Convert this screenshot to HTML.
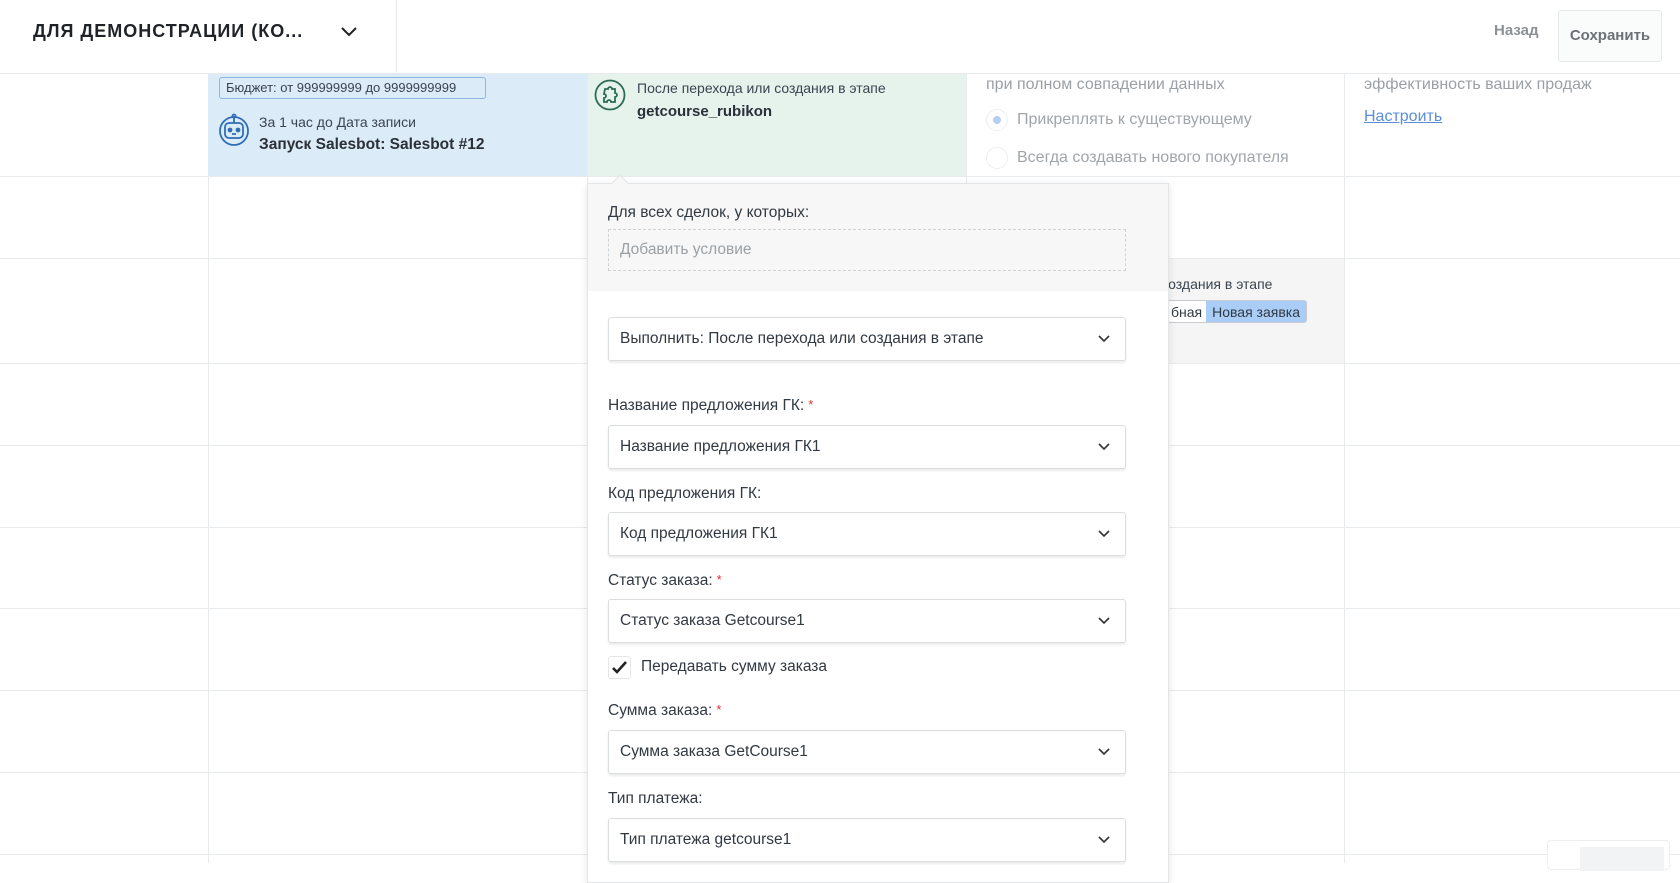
<!DOCTYPE html>
<html><head><meta charset="utf-8"><style>
*{box-sizing:border-box;margin:0;padding:0}
body{width:1680px;height:863px;overflow:hidden;background:#fff;font-family:"Liberation Sans","DejaVu Sans",sans-serif;color:#313942;position:relative}
.a{position:absolute}
.hl{position:absolute;height:1px;background:#e8ebed;left:0;width:1680px}
.vl{position:absolute;width:1px;background:#e8ebed;top:73px;height:790px}
.lab{position:absolute;left:20px;font-size:15.5px;color:#313942;white-space:nowrap}
.lab i{color:#e0312c;font-style:normal;font-size:13px;vertical-align:top;margin-left:4px}
.sel{position:absolute;left:20px;width:518px;height:44px;border:1px solid #dbdedf;border-radius:3px;background:#fff;box-shadow:0 2px 2px rgba(0,0,0,.08);font-size:15.5px;line-height:42px;padding-left:11px;white-space:nowrap}
.sel svg{position:absolute;right:14px;top:16px}
</style></head><body>
<div class="a" style="left:33px;top:21px;font-size:18px;font-weight:bold;letter-spacing:1px;color:#1f2328">ДЛЯ ДЕМОНСТРАЦИИ (КО...</div>
<svg class="a" style="left:340px;top:26px" width="18" height="12" viewBox="0 0 18 12"><path d="M2 2l7 7 7-7" fill="none" stroke="#222" stroke-width="2"/></svg>
<div class="a" style="left:396px;top:0;width:1px;height:73px;background:#e8ebed"></div>
<div class="a" style="left:1494px;top:22px;font-size:15px;font-weight:bold;color:#8c9196">Назад</div>
<div class="a" style="left:1558px;top:10px;width:104px;height:52px;border:1px solid #e6e8ea;border-radius:3px;background:#fafbfb;font-size:15px;font-weight:bold;color:#6b7177;text-align:center;line-height:50px">Сохранить</div>
<div class="hl" style="top:73px"></div>
<div class="vl" style="left:208px"></div><div class="vl" style="left:587px"></div><div class="vl" style="left:966px"></div><div class="vl" style="left:1344px"></div>
<div class="hl" style="top:176px"></div><div class="hl" style="top:258px"></div><div class="hl" style="top:363px"></div><div class="hl" style="top:445px"></div><div class="hl" style="top:527px"></div><div class="hl" style="top:608px"></div><div class="hl" style="top:690px"></div><div class="hl" style="top:772px"></div><div class="hl" style="top:854px"></div>
<div class="a" style="left:208px;top:74px;width:379px;height:102px;background:#dcebf8"></div>
<div class="a" style="left:219px;top:77px;width:267px;height:22px;border:1px solid #8fb5df;border-radius:3px;font-size:13px;line-height:20px;padding-left:6px;color:#3a4450;white-space:nowrap">Бюджет: от 999999999 до 9999999999</div>
<svg class="a" style="left:216px;top:111px" width="36" height="36" viewBox="0 0 36 36" fill="none" stroke="#2f6db5" stroke-width="1.8"><circle cx="18" cy="20" r="14"/><rect x="9" y="12" width="18" height="15" rx="4"/><circle cx="14" cy="19" r="1.5" fill="#2f6db5"/><circle cx="22" cy="19" r="1.5" fill="#2f6db5"/><path d="M16 23h4M18 12V7"/><circle cx="18" cy="5" r="1.5"/></svg>
<div class="a" style="left:259px;top:114px;font-size:14px;color:#3a4450">За 1 час до Дата записи</div>
<div class="a" style="left:259px;top:136px;font-size:15.5px;font-weight:bold;color:#2a3038">Запуск Salesbot: Salesbot #12</div>
<div class="a" style="left:588px;top:74px;width:378px;height:102px;background:#e6f2ec"></div>
<svg class="a" style="left:594px;top:79px" width="32" height="32" viewBox="0 0 32 32" fill="none" stroke="#2d6b55" stroke-width="1.8"><circle cx="16" cy="16" r="14.5"/><path d="M11 10h3a2 2 0 1 1 4 0h3v4a2 2 0 1 1 0 4v5h-4a2 2 0 1 0-4 0h-3v-4a2 2 0 1 0 0-4z"/></svg>
<div class="a" style="left:637px;top:80px;font-size:14px;color:#3a4450">После перехода или создания в этапе</div>
<div class="a" style="left:637px;top:103px;font-size:15px;font-weight:bold;color:#2a3038">getcourse_rubikon</div>
<div class="a" style="left:986px;top:76px;font-size:16px;color:#9aa0a5">при полном совпадении данных</div>
<div class="a" style="left:986px;top:109px;width:22px;height:22px;border-radius:50%;border:1px solid #eceef0"><div class="a" style="left:6px;top:6px;width:8px;height:8px;border-radius:50%;background:#b7cdf2"></div></div>
<div class="a" style="left:1017px;top:111px;font-size:16px;color:#a0a5aa">Прикреплять к существующему</div>
<div class="a" style="left:986px;top:147px;width:22px;height:22px;border-radius:50%;border:1px solid #eceef0"></div>
<div class="a" style="left:1017px;top:149px;font-size:16px;color:#a0a5aa">Всегда создавать нового покупателя</div>
<div class="a" style="left:1364px;top:76px;font-size:16px;color:#9aa0a5">эффективность ваших продаж</div>
<div class="a" style="left:1364px;top:108px;font-size:16px;color:#5b8ed8;text-decoration:underline">Настроить</div>
<div class="a" style="left:1100px;top:259px;width:244px;height:104px;background:#f5f5f5"></div>
<div class="a" style="left:1161px;top:276px;font-size:14px;color:#3a4450">создания в этапе</div>
<div class="a" style="left:1166px;top:300px;height:23px;font-size:14px;line-height:22px;border:1px solid #c8ccd0;border-radius:3px;overflow:hidden;white-space:nowrap;background:#fff"><span style="padding:0 4px">бная</span><span style="background:#a9cdf7;padding:0 6px;display:inline-block">Новая заявка</span></div>
<div class="a" style="left:587px;top:183px;width:582px;height:700px;background:#fff;border:1px solid #e3e5e7;box-shadow:0 2px 8px rgba(0,0,0,.1)">
 <div class="a" style="left:0;top:0;width:580px;height:107px;background:#f7f7f7"></div>
 <div class="a" style="left:26px;top:-7px;width:12px;height:12px;background:#f7f7f7;border-left:1px solid #e3e5e7;border-top:1px solid #e3e5e7;transform:rotate(45deg)"></div>
 <div class="lab" style="top:20px">Для всех сделок, у которых:</div>
 <div class="a" style="left:20px;top:45px;width:518px;height:42px;border:1px dashed #cfd2d4;font-size:15.5px;color:#9aa0a5;padding-left:11px;line-height:40px">Добавить условие</div>
 <div class="sel" style="top:133px">Выполнить: После перехода или создания в этапе<svg width="14" height="9" viewBox="0 0 14 9"><path d="M2 2l5 5 5-5" fill="none" stroke="#333" stroke-width="1.6"/></svg></div>
 <div class="lab" style="top:213px">Название предложения ГК:<i>*</i></div>
 <div class="sel" style="top:241px">Название предложения ГК1<svg width="14" height="9" viewBox="0 0 14 9"><path d="M2 2l5 5 5-5" fill="none" stroke="#333" stroke-width="1.6"/></svg></div>
 <div class="lab" style="top:301px">Код предложения ГК:</div>
 <div class="sel" style="top:328px">Код предложения ГК1<svg width="14" height="9" viewBox="0 0 14 9"><path d="M2 2l5 5 5-5" fill="none" stroke="#333" stroke-width="1.6"/></svg></div>
 <div class="lab" style="top:388px">Статус заказа:<i>*</i></div>
 <div class="sel" style="top:415px">Статус заказа Getcourse1<svg width="14" height="9" viewBox="0 0 14 9"><path d="M2 2l5 5 5-5" fill="none" stroke="#333" stroke-width="1.6"/></svg></div>
 <div class="a" style="left:20px;top:472px;width:23px;height:23px;border:1px solid #e4e6e8;border-radius:3px"><svg width="21" height="21" viewBox="0 0 21 21"><path d="M4 11l4 4 9-10" fill="none" stroke="#222" stroke-width="2.6"/></svg></div>
 <div class="lab" style="left:53px;top:474px">Передавать сумму заказа</div>
 <div class="lab" style="top:518px">Сумма заказа:<i>*</i></div>
 <div class="sel" style="top:546px">Сумма заказа GetCourse1<svg width="14" height="9" viewBox="0 0 14 9"><path d="M2 2l5 5 5-5" fill="none" stroke="#333" stroke-width="1.6"/></svg></div>
 <div class="lab" style="top:606px">Тип платежа:</div>
 <div class="sel" style="top:634px">Тип платежа getcourse1<svg width="14" height="9" viewBox="0 0 14 9"><path d="M2 2l5 5 5-5" fill="none" stroke="#333" stroke-width="1.6"/></svg></div>
</div>
<div class="a" style="left:1547px;top:840px;width:123px;height:30px;border:1px solid #eceef0;border-radius:4px;background:#fff"><div class="a" style="left:32px;top:6px;width:84px;height:24px;background:#f2f3f4"></div></div>
</body></html>
